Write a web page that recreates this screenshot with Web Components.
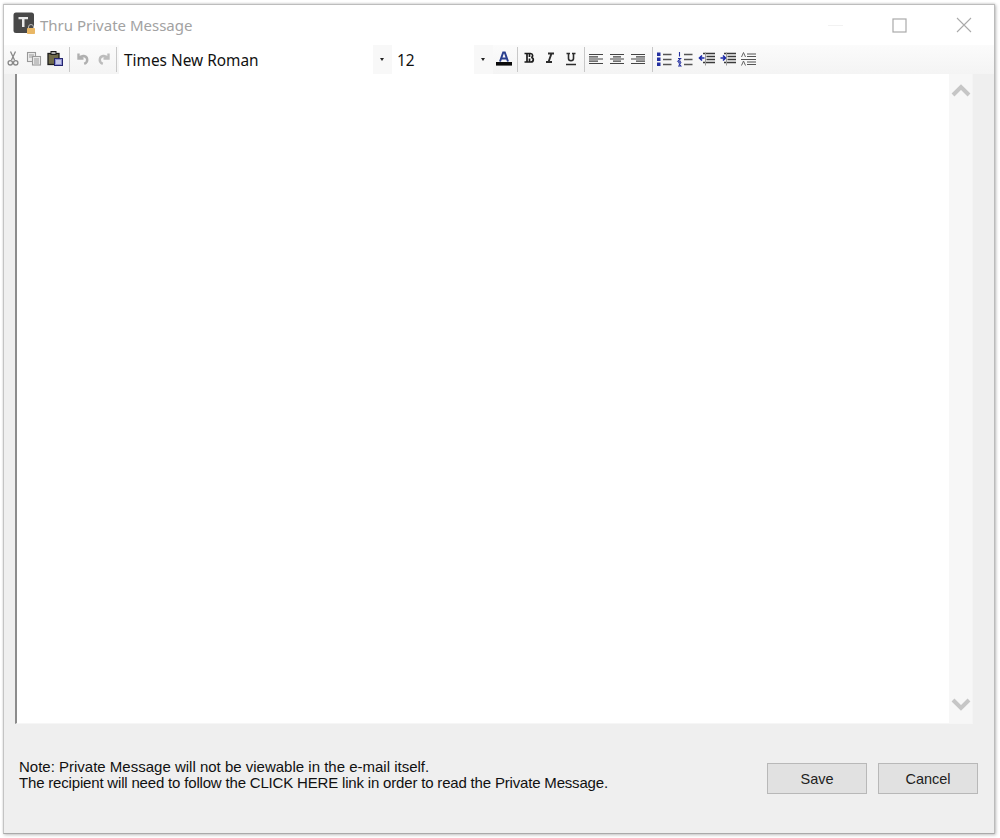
<!DOCTYPE html>
<html>
<head>
<meta charset="utf-8">
<title>Thru Private Message</title>
<style>
  html, body { margin: 0; height: 100%; background: #fff; }
</style>
</head>
<body>
<app-window>
  <title-bar slot="title">Thru Private Message</title-bar>
  <rich-toolbar slot="toolbar"></rich-toolbar>
  <editor-pane slot="editor"></editor-pane>
  <note-footer slot="footer">
    Note: Private Message will not be viewable in the e-mail itself.<br>
    <span style="letter-spacing:-0.18px">The recipient will need to follow the CLICK HERE link in order to read the Private Message.</span>
    <dialog-button slot="actions">Save</dialog-button>
    <dialog-button slot="actions">Cancel</dialog-button>
  </note-footer>
</app-window>
<script>
(function(){
    const ICONS = {
        cut: `<g fill="none" stroke="#888" stroke-width="1.3"><path d="M6.500 1.500l4 8.500M11.500 1.500l-4 8.500"/><circle cx="6.300" cy="12.800" r="2.200"/><circle cx="11.700" cy="12.800" r="2.200"/></g>`,
        copy: `<g fill="#eee" stroke="#999" stroke-width="1.100"><rect x="2.500" y="2.500" width="8" height="9"/><rect x="7.500" y="6.500" width="8" height="8.500"/></g><path d="M4 5h5M4 7h3M9 9h5M9 11h5M9 13h5" stroke="#999"/>`,
        paste: `<rect x="2" y="3.500" width="11" height="11" fill="#6f6a4a" stroke="#1c1c1c" stroke-width="1.300"/><rect x="5" y="1.500" width="5" height="3" fill="#aaa" stroke="#1c1c1c"/><rect x="8.500" y="8.500" width="8" height="7" fill="#8b8fd0" stroke="#24246e"/><path d="M10 11h5M10 13h5" stroke="#fff"/>`,
        undo: `<path d="M4.500 3.500v5h5M5 8c2.600-3.200 7.600-2.600 8.200 1.200.3 2-1 3.800-3 4.600" fill="none" stroke="#b0b0b0" stroke-width="2.400"/>`,
        redo: `<path d="M13.500 3.500v5h-5M13 8c-2.600-3.200-7.600-2.600-8.200 1.200-.3 2 1 3.800 3 4.600" fill="none" stroke="#bcbcbc" stroke-width="2.400"/>`,
        color: `<path d="M5 11.500L8.200 2.500h1.600L13 11.500M6.400 8.500h5.200" fill="none" stroke="#2a3f8f" stroke-width="2"/><rect x="1" y="12" width="16" height="3.600" fill="#0a0a0a"/>`,
        bold: `<path d="M4.500 3.500h6c2.600 0 2.800 3.400.8 4 2.800.4 2.600 4.500-.4 4.500H4.500M7 3.500v8.500M9.500 4v3M9.500 8.500v3" fill="none" stroke="#1c1c1c" stroke-width="1.700"/>`,
        italic: `<path d="M7 3.500h6M5 12h6M10.500 3.500L7.500 12" fill="none" stroke="#2c2c2c" stroke-width="1.900"/>`,
        underline: `<path d="M4.500 3.500h3.500M10 3.500h3.500M6.500 3.500v5c0 3 5 3 5 0v-5M4 14.500h10" fill="none" stroke="#2c2c2c" stroke-width="1.600"/>`,
        left: `<path d="M2 4.500h14M2 6.800h9M2 9h14M2 11.200h9M2 13.500h14" stroke="#444" stroke-width="1.200"/>`,
        center: `<path d="M2 4.500h14M5 6.800h8M2 9h14M5 11.200h8M2 13.500h14" stroke="#444" stroke-width="1.200"/>`,
        right: `<path d="M2 4.500h14M7 6.800h9M2 9h14M7 11.200h9M2 13.500h14" stroke="#444" stroke-width="1.200"/>`,
        bullets: `<path d="M2 2.500h3.500V6H2zM2 7.500h3.500V11H2zM2 12.500h3.500V16H2z" fill="#2430a0"/><path d="M8 4.500h8.500M8 9.500h8.500M8 14.500h8.500" stroke="#555" stroke-width="1.400"/>`,
        numbers: `<path d="M3.500 2v4.500M2 8.500h2.600L2 11.200h3M2 12.800h2.600L3.400 14.400l1.400 1.600H2" fill="none" stroke="#2430a0" stroke-width="1.100"/><path d="M8 4.500h8.500M8 9.500h8.500M8 14.500h8.500" stroke="#555" stroke-width="1.400"/>`,
        outdent: `<path d="M6 3.500h12M9.500 6.500H18M9.500 9.500H18M6 12.500h12" stroke="#3a3a3a" stroke-width="1.600"/><path d="M2.500 8h5M5 5.500L2.500 8 5 10.500" fill="none" stroke="#1c2aa8" stroke-width="1.600"/><path d="M8.500 2.500v13" stroke="#9a9a9a"/>`,
        indent: `<path d="M6 3.500h12M9.500 6.500H18M9.500 9.500H18M6 12.500h12" stroke="#3a3a3a" stroke-width="1.600"/><path d="M2.500 8h5M5 5.500L7.500 8 5 10.500" fill="none" stroke="#1c2aa8" stroke-width="1.600"/><path d="M8.500 2.500v13" stroke="#9a9a9a"/>`,
        spacing: `<path d="M8 4h9M8 6.500h9M2 9.500h15M8 12h9M8 14.500h9" stroke="#555" stroke-width="1.200"/><path d="M2.500 7l2-4.500 2 4.500M2.500 15.500l2-4.500 2 4.500" fill="none" stroke="#666"/>`
    }

    class AppWindow extends HTMLElement {
        connectedCallback() {
            this.attachShadow({mode: "open"})
            this.shadowRoot.innerHTML = `
                <style>
                    :host {
                        display: flex;
                        flex-direction: column;
                        box-sizing: border-box;
                        width: 992px;
                        height: 830px;
                        margin: 4px 0 0 3px;
                        background: #efefef;
                        border: 1px solid #c4c4c4;
                        border-top-color: #bdbdbd;
                        border-right-color: #bbb;
                        border-bottom-color: #aaa;
                        box-shadow: 1px 1px 3px rgba(0,0,0,0.25), 0 -1px 2px rgba(0,0,0,0.1);
                    }
                </style>
                <slot name="title"></slot>
                <slot name="toolbar"></slot>
                <slot name="editor"></slot>
                <slot name="footer"></slot>
            `
        }
    }

    class TitleBar extends HTMLElement {
        connectedCallback() {
            this.attachShadow({mode: "open"})
            this.shadowRoot.innerHTML = `
                <style>
                    :host {
                        display: flex;
                        align-items: center;
                        height: 40px;
                        background: #fff;
                        padding-left: 9px;
                        color: #a2a2a2;
                        font: 15px "Noto Sans", "Open Sans", sans-serif;
                    }
                    .logo { width: 24px; height: 24px; margin-right: 3px; margin-top: -2px; }
                    .label { margin-top: -1px; }
                    .controls { display: flex; align-items: center; margin-left: auto; }
                    .controls svg { display: block; }
                    .min { margin-right: 49px; }
                    .max { margin-right: 49px; }
                    .close { margin-right: 22px; }
                </style>
                <svg class="logo" viewBox="0 0 24 24">
                    <rect x="0.500" y="0.500" width="20.500" height="20.500" rx="2.500" fill="#484848"/>
                    <path d="M5.500 5h9.500v2.200h-3.500V15H9V7.200H5.500z" fill="#eaeaea"/>
                    <path d="M15.500 16.500v-1.500a2.500 2.500 0 0 1 5 0v1.500" fill="none" stroke="#b8b8b8"/>
                    <rect x="14" y="16" width="8" height="6" rx="0.800" fill="#e9b765"/>
                </svg>
                <span class="label"><slot></slot></span>
                <div class="controls">
                    <svg class="min" width="15" height="15" viewBox="0 0 15 15"><path d="M0 7.500h15" stroke="#f2f2f2"/></svg>
                    <svg class="max" width="15" height="15" viewBox="0 0 15 15"><rect x="1" y="1" width="13" height="13" fill="none" stroke="#aaa" stroke-width="1.200"/></svg>
                    <svg class="close" width="16" height="16" viewBox="0 0 16 16"><path d="M1 1l14 14M15 1L1 15" stroke="#aaa" stroke-width="1.100"/></svg>
                </div>
            `
        }
    }

    class ToolIcon extends HTMLElement {
        connectedCallback() {
            this.attachShadow({mode: "open"})
            const name = this.getAttribute("name")
            this.shadowRoot.innerHTML = `
                <style>
                    :host { display: flex; align-items: center; justify-content: center; width: 21px; height: 29px; flex: none; }
                    svg { display: block; margin-top: -2px; filter: blur(0.35px); }
                </style>
                <svg width="18" height="18" viewBox="0 0 18 18">${ICONS[name]}</svg>
            `
        }
    }

    class ToolSep extends HTMLElement {
        connectedCallback() {
            this.attachShadow({mode: "open"})
            this.shadowRoot.innerHTML = `
                <style>
                    :host { display: block; width: 1px; height: 25px; background: #c8c8c8; flex: none; margin: 0 2px; }
                </style>
            `
        }
    }

    class ComboBox extends HTMLElement {
        connectedCallback() {
            this.attachShadow({mode: "open"})
            this.shadowRoot.innerHTML = `
                <style>
                    :host { display: flex; height: 29px; flex: none; color: #111; font: 15.400px "Noto Sans", "Open Sans", sans-serif; }
                    .value { flex: 1; display: flex; align-items: center; padding: 1px 0 0 5px; background: #fff; }
                    .arrow { width: 19px; display: flex; align-items: center; justify-content: center; background: #f8f8f8; }
                    .arrow i { border: 2.500px solid transparent; border-top: 3px solid #222; border-bottom: 0; margin-right: 2px; }
                </style>
                <div class="value"><slot></slot></div>
                <div class="arrow"><i></i></div>
            `
        }
    }

    class RichToolbar extends HTMLElement {
        connectedCallback() {
            this.attachShadow({mode: "open"})
            this.shadowRoot.innerHTML = `
                <style>
                    :host {
                        display: flex;
                        align-items: center;
                        height: 29px;
                        flex: none;
                        background: linear-gradient(#fbfbfb, #f4f4f4);
                    }
                    .lead { width: 0; margin-left: -2px; }
                    .fonts { width: 273px; }
                    .size { width: 101px; }
                </style>
                <div class="lead"></div>
                <tool-icon name="cut"></tool-icon>
                <tool-icon name="copy"></tool-icon>
                <tool-icon name="paste"></tool-icon>
                <tool-sep style="margin:0 2px 0 4px"></tool-sep>
                <tool-icon name="undo"></tool-icon>
                <tool-icon name="redo"></tool-icon>
                <tool-sep></tool-sep>
                <combo-box class="fonts">Times New Roman</combo-box>
                <combo-box class="size">12</combo-box>
                <tool-icon name="color"></tool-icon>
                <tool-sep style="margin:0 0 0 3px"></tool-sep>
                <tool-icon name="bold"></tool-icon>
                <tool-icon name="italic"></tool-icon>
                <tool-icon name="underline"></tool-icon>
                <tool-sep style="margin:0 0 0 3px"></tool-sep>
                <tool-icon name="left"></tool-icon>
                <tool-icon name="center"></tool-icon>
                <tool-icon name="right"></tool-icon>
                <tool-sep style="margin:0 0 0 4px"></tool-sep>
                <tool-icon name="bullets"></tool-icon>
                <tool-icon name="numbers"></tool-icon>
                <tool-icon name="outdent"></tool-icon>
                <tool-icon name="indent"></tool-icon>
                <tool-icon name="spacing"></tool-icon>
            `
        }
    }

    class EditorPane extends HTMLElement {
        connectedCallback() {
            this.attachShadow({mode: "open"})
            this.shadowRoot.innerHTML = `
                <style>
                    :host {
                        display: flex;
                        box-sizing: border-box;
                        flex: none;
                        width: 958px;
                        height: 650px;
                        margin-left: 11px;
                        background: #fff;
                        border-left: 2px solid #8c8c8c;
                        border-bottom: 1px solid #f6f6f6;
                        border-right: 1px solid #f4f4f4;
                    }
                    .text { flex: 1; }
                    .rail {
                        width: 23px;
                        display: flex;
                        flex-direction: column;
                        justify-content: space-between;
                        align-items: center;
                        background: #f7f7f7;
                        padding: 9px 0 11px;
                    }
                    svg { display: block; }
                </style>
                <div class="text"></div>
                <div class="rail">
                    <svg width="20" height="14" viewBox="0 0 20 14"><path d="M2 12l8-8 8 8" fill="none" stroke="#c6c6c6" stroke-width="4"/></svg>
                    <svg width="20" height="14" viewBox="0 0 20 14"><path d="M2 2l8 8 8-8" fill="none" stroke="#c6c6c6" stroke-width="4"/></svg>
                </div>
            `
        }
    }

    class NoteFooter extends HTMLElement {
        connectedCallback() {
            this.attachShadow({mode: "open"})
            this.shadowRoot.innerHTML = `
                <style>
                    :host {
                        display: flex;
                        flex: 1;
                        align-items: flex-start;
                        padding: 35px 16px 0 15px;
                        background: #efefef;
                        color: #111;
                        font: 15px/16px "Liberation Sans", Arial, sans-serif;
                    }
                    .note { flex: 1; }
                    .actions { display: flex; gap: 11px; margin-top: 4px; }
                </style>
                <div class="note"><slot></slot></div>
                <div class="actions"><slot name="actions"></slot></div>
            `
        }
    }

    class DialogButton extends HTMLElement {
        connectedCallback() {
            this.attachShadow({mode: "open"})
            this.shadowRoot.innerHTML = `
                <style>
                    :host {
                        display: flex;
                        align-items: center;
                        justify-content: center;
                        box-sizing: border-box;
                        width: 100px;
                        height: 31px;
                        background: #e1e1e1;
                        border: 1px solid #b8b8b8;
                        color: #222;
                        font: 14.500px "Liberation Sans", Arial, sans-serif;
                    }
                </style>
                <slot></slot>
            `
        }
    }

    customElements.define('tool-icon', ToolIcon)
    customElements.define('tool-sep', ToolSep)
    customElements.define('combo-box', ComboBox)
    customElements.define('rich-toolbar', RichToolbar)
    customElements.define('title-bar', TitleBar)
    customElements.define('editor-pane', EditorPane)
    customElements.define('note-footer', NoteFooter)
    customElements.define('dialog-button', DialogButton)
    customElements.define('app-window', AppWindow)
})()
</script>
</body>
</html>
